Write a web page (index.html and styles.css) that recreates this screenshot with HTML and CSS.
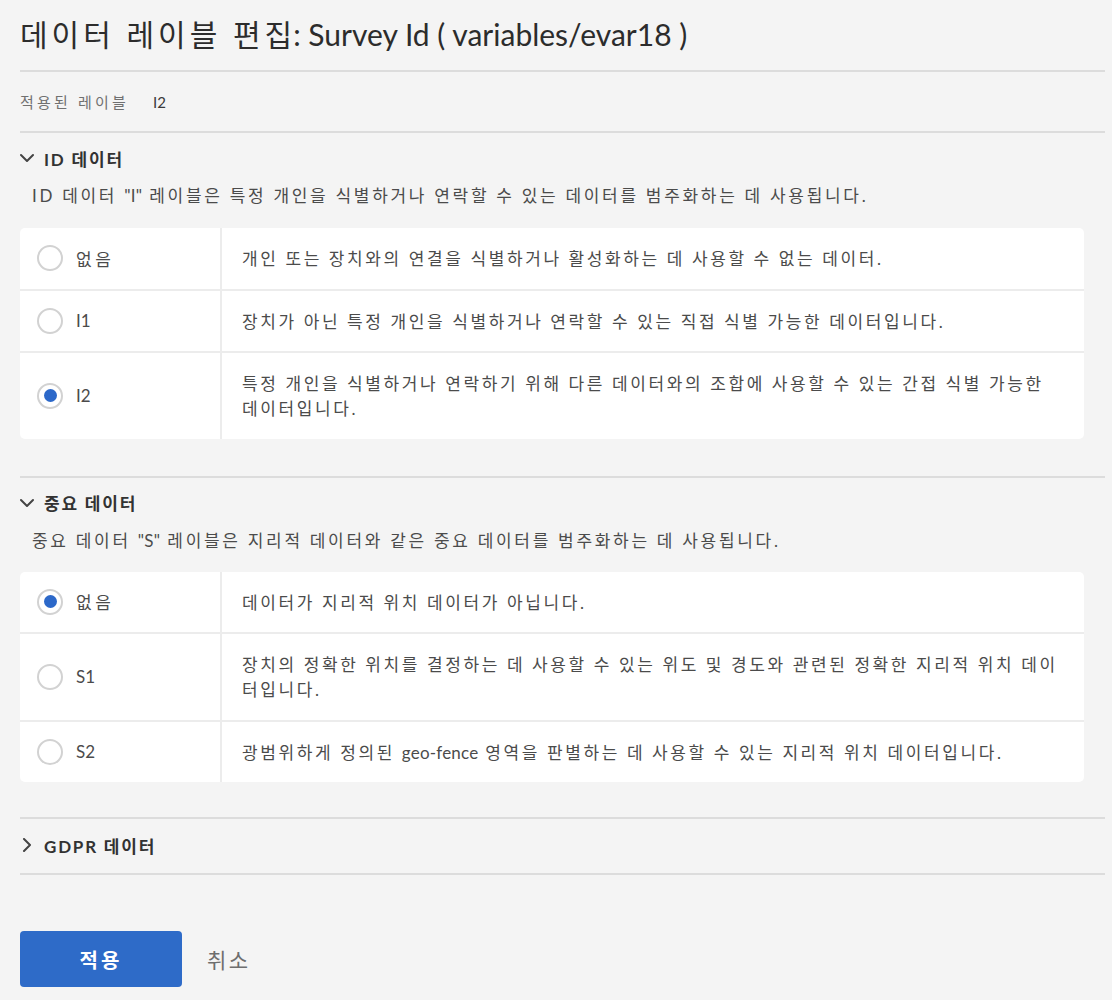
FILE: index.html
```html
<!DOCTYPE html>
<html lang="ko">
<head>
<meta charset="utf-8">
<title>데이터 레이블 편집</title>
<link rel="stylesheet" href="styles.css">
</head>
<body>
<div class="page">
  <header class="head">
    <h1 class="title"><span class="ko">데이터 레이블 편집</span>: Survey Id ( variables/evar18 )</h1>
  </header>
  <div class="applied">
    <span class="applied-label">적용된 레이블</span>
    <span class="applied-value">I2</span>
  </div>

  <section class="section sec-id">
    <div class="sec-head">
      <svg class="chev" width="14" height="14" viewBox="0 0 14 14"><path d="M1 4 L7 10 L13 4" fill="none" stroke="#444" stroke-width="2" stroke-linecap="round" stroke-linejoin="round"/></svg>
      <span class="sec-title">ID 데이터</span>
    </div>
    <p class="sec-desc">ID 데이터 <span class="lat">"I"</span> 레이블은 특정 개인을 식별하거나 연락할 수 있는 데이터를 범주화하는 데 사용됩니다.</p>
    <div class="card">
      <div class="row">
        <div class="c-opt"><span class="radio"></span><span class="opt">없음</span></div>
        <div class="c-desc">개인 또는 장치와의 연결을 식별하거나 활성화하는 데 사용할 수 없는 데이터.</div>
      </div>
      <div class="row">
        <div class="c-opt"><span class="radio"></span><span class="opt lat">I1</span></div>
        <div class="c-desc">장치가 아닌 특정 개인을 식별하거나 연락할 수 있는 직접 식별 가능한 데이터입니다.</div>
      </div>
      <div class="row">
        <div class="c-opt"><span class="radio on"></span><span class="opt lat">I2</span></div>
        <div class="c-desc">특정 개인을 식별하거나 연락하기 위해 다른 데이터와의 조합에 사용할 수 있는 간접 식별 가능한 데이터입니다.</div>
      </div>
    </div>
  </section>

  <section class="section sec-s">
    <div class="sec-head">
      <svg class="chev" width="14" height="14" viewBox="0 0 14 14"><path d="M1 4 L7 10 L13 4" fill="none" stroke="#444" stroke-width="2" stroke-linecap="round" stroke-linejoin="round"/></svg>
      <span class="sec-title">중요 데이터</span>
    </div>
    <p class="sec-desc">중요 데이터 <span class="lat">"S"</span> 레이블은 지리적 데이터와 같은 중요 데이터를 범주화하는 데 사용됩니다.</p>
    <div class="card">
      <div class="row">
        <div class="c-opt"><span class="radio on"></span><span class="opt">없음</span></div>
        <div class="c-desc">데이터가 지리적 위치 데이터가 아닙니다.</div>
      </div>
      <div class="row">
        <div class="c-opt"><span class="radio"></span><span class="opt lat">S1</span></div>
        <div class="c-desc">장치의 정확한 위치를 결정하는 데 사용할 수 있는 위도 및 경도와 관련된 정확한 지리적 위치 데이터입니다.</div>
      </div>
      <div class="row">
        <div class="c-opt"><span class="radio"></span><span class="opt lat">S2</span></div>
        <div class="c-desc">광범위하게 정의된 <span class="lat">geo-fence</span> 영역을 판별하는 데 사용할 수 있는 지리적 위치 데이터입니다.</div>
      </div>
    </div>
  </section>

  <section class="section collapsed">
    <div class="sec-head">
      <svg class="chev" width="14" height="14" viewBox="0 0 14 14"><path d="M4 1 L10 7 L4 13" fill="none" stroke="#444" stroke-width="2" stroke-linecap="round" stroke-linejoin="round"/></svg>
      <span class="sec-title">GDPR 데이터</span>
    </div>
  </section>

  <div class="actions">
    <button class="btn-apply">적용</button>
    <button class="btn-cancel">취소</button>
  </div>
</div>
</body>
</html>
```

FILE: styles.css
```css
* { box-sizing: border-box; }
html, body { margin: 0; padding: 0; }
body {
  background: #f4f4f4;
  font-family: "Lato", "Noto Sans CJK KR", sans-serif;
  color: #4b4b4b;
}
.lat { letter-spacing: 0.2px; }
.page {
  width: 1105px;
  padding-left: 20px;
}
.head {
  height: 72px;
  display: flex;
  align-items: center;
  border-bottom: 2px solid #dcdcdc;
}
.title {
  margin: 0;
  font-size: 30px;
  font-weight: 400;
  color: #2c2c2c;
  line-height: 36px;
  padding-bottom: 2px;
}
.title .ko { letter-spacing: 4px; margin-right: -3px; }
.applied {
  height: 61px;
  display: flex;
  align-items: center;
  border-bottom: 2px solid #dcdcdc;
  font-size: 15px;
}
.applied-label {
  color: #707070;
  letter-spacing: 3.2px;
  width: 133px;
}
.applied-value { color: #3a3a3a; }
.section {
  border-bottom: 2px solid #dcdcdc;
  padding-top: 13px;
  padding-bottom: 36px;
}
.sec-id { padding-bottom: 37px; }
.sec-s { padding-bottom: 35px; }
.section.collapsed {
  padding-top: 14px;
  padding-bottom: 16px;
}
.sec-head {
  display: flex;
  align-items: center;
  height: 24px;
  gap: 10px;
}
.chev { flex: none; }
.sec-title {
  font-size: 17px;
  font-weight: 700;
  color: #323232;
  letter-spacing: 1.8px;
}
.sec-desc {
  margin: 14px 0 19px 12px;
  font-size: 17px;
  line-height: 24px;
  letter-spacing: 2.7px;
  color: #4b4b4b;
}
.sec-id .sec-desc { margin-bottom: 20px; }
.card {
  width: 1064px;
  background: #fff;
  border-radius: 5px;
}
.row {
  display: flex;
  border-bottom: 2px solid #ececec;
}
.row:last-child { border-bottom: 0; }
.c-opt {
  width: 202px;
  flex: none;
  border-right: 2px solid #ececec;
  display: flex;
  align-items: center;
  padding-left: 17px;
  gap: 13px;
}
.c-desc {
  flex: 1;
  padding: 18px 18px 17.5px 20px;
  font-size: 17px;
  line-height: 25px;
  letter-spacing: 2.6px;
  color: #4b4b4b;
}
.radio {
  width: 26px;
  height: 26px;
  border-radius: 50%;
  border: 2px solid #d2d2d2;
  background: #fff;
  flex: none;
  display: flex;
  align-items: center;
  justify-content: center;
}
.radio.on::after {
  content: "";
  width: 13px;
  height: 13px;
  border-radius: 50%;
  background: #2c68c9;
}
.opt {
  font-size: 17px;
  color: #4b4b4b;
  letter-spacing: 3.5px;
}
.opt.lat { letter-spacing: 0; }
.actions {
  margin-top: 56px;
  display: flex;
  align-items: center;
  gap: 25px;
}
.btn-apply {
  width: 162px;
  height: 56px;
  border: 0;
  border-radius: 4px;
  background: #2e6bc8;
  color: #fff;
  font-family: inherit;
  font-size: 20px;
  font-weight: 700;
  letter-spacing: 3px;
  cursor: pointer;
}
.btn-cancel {
  border: 0;
  background: none;
  padding: 0;
  font-family: inherit;
  font-size: 21px;
  letter-spacing: 2.5px;
  color: #6e6e6e;
  cursor: pointer;
}
```
